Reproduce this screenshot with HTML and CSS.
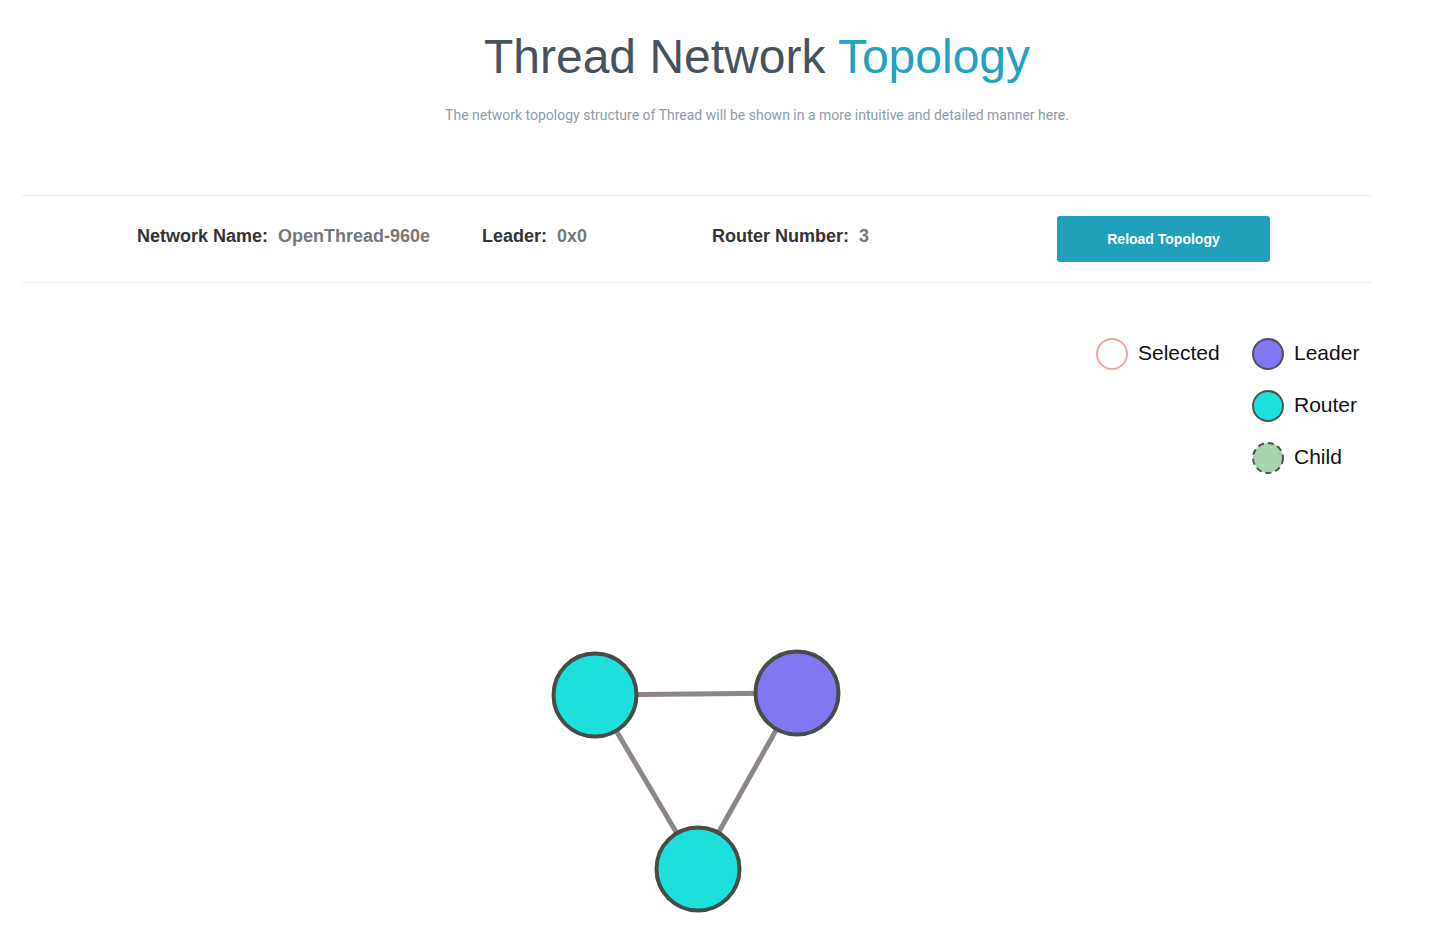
FILE: index.html
```html
<!DOCTYPE html>
<html lang="en">
<head>
<meta charset="utf-8">
<title>Thread Network Topology</title>
<link rel="stylesheet" href="styles.css">
</head>
<body>
<header class="page-header">
  <h1 class="title">Thread Network <span class="accent">Topology</span></h1>
  <p class="subtitle">The network topology structure of Thread will be shown in a more intuitive and detailed manner here.</p>
</header>

<section class="info-bar">
  <div class="info-item"><span class="info-label">Network Name:</span><span class="info-value">OpenThread-960e</span></div>
  <div class="info-item"><span class="info-label">Leader:</span><span class="info-value">0x0</span></div>
  <div class="info-item"><span class="info-label">Router Number:</span><span class="info-value">3</span></div>
  <div class="info-action"><button class="reload-btn" type="button">Reload Topology</button></div>
</section>

<section class="graph-area">
  <svg class="graph" width="1436" height="648" viewBox="0 0 1436 648">
    <g class="edges">
      <line x1="595" y1="412" x2="797" y2="410"/>
      <line x1="595" y1="412" x2="698" y2="586"/>
      <line x1="797" y1="410" x2="698" y2="586"/>
    </g>
    <g class="nodes">
      <circle class="node router" cx="595" cy="412" r="41.5"/>
      <circle class="node leader" cx="797" cy="410" r="41.5"/>
      <circle class="node router" cx="698" cy="586" r="41.5"/>
    </g>
  </svg>

  <div class="legend">
    <div class="legend-item legend-selected">
      <svg class="legend-dot" width="34" height="34" viewBox="0 0 34 34"><circle cx="17" cy="17" r="15" class="dot-selected"/></svg>
      <span class="legend-text">Selected</span>
    </div>
    <div class="legend-item">
      <svg class="legend-dot" width="34" height="34" viewBox="0 0 34 34"><circle cx="17" cy="17" r="15" class="dot-leader"/></svg>
      <span class="legend-text">Leader</span>
    </div>
    <div class="legend-item legend-col2">
      <svg class="legend-dot" width="34" height="34" viewBox="0 0 34 34"><circle cx="17" cy="17" r="15" class="dot-router"/></svg>
      <span class="legend-text">Router</span>
    </div>
    <div class="legend-item legend-col2">
      <svg class="legend-dot" width="34" height="34" viewBox="0 0 34 34"><circle cx="17" cy="17" r="15" class="dot-child"/></svg>
      <span class="legend-text">Child</span>
    </div>
  </div>
</section>
</body>
</html>
```

FILE: styles.css
```css
* { box-sizing: border-box; }

html, body {
  margin: 0;
  padding: 0;
  background: #ffffff;
}

body {
  font-family: "Liberation Sans", Arial, sans-serif;
  color: #333333;
  width: 1436px;
  min-height: 931px;
  overflow: hidden;
}

.page-header {
  padding-left: 78px;
  text-align: center;
  height: 195px;
  padding-top: 27px;
}

.title {
  margin: 0;
  font-family: "Liberation Sans", Arial, sans-serif;
  font-weight: 400;
  font-size: 48px;
  line-height: 60px;
  color: #47525e;
}

.title .accent {
  color: #22a1c1;
}

.subtitle {
  margin: 18px 0 0;
  font-family: Roboto, "Liberation Sans", sans-serif;
  font-weight: 400;
  font-size: 14px;
  line-height: 20px;
  color: #8e9aa8;
}

.info-bar {
  margin: 0 64px 0 22px;
  height: 88px;
  border-top: 1px solid #eeeeee;
  border-bottom: 1px solid #eeeeee;
  display: grid;
  grid-template-columns: 345px 230px 345px 213px;
  align-items: center;
  padding-left: 115px;
}

.info-item {
  font-family: "Liberation Sans", Arial, sans-serif;
  font-weight: 700;
  font-size: 18px;
  margin-top: -6px;
  white-space: nowrap;
}

.info-label {
  color: #333333;
  margin-right: 10px;
}

.info-value {
  color: #777777;
}

.info-action {
  display: flex;
}

.reload-btn {
  width: 213px;
  height: 46px;
  border: none;
  border-radius: 3px;
  background: #21a0bc;
  color: #ffffff;
  font-family: "Liberation Sans", Arial, sans-serif;
  font-weight: 700;
  font-size: 14px;
  cursor: pointer;
  margin-top: 0;
}

.graph-area {
  position: relative;
  height: 648px;
}

.graph {
  display: block;
}

.edges line {
  stroke: #8e8686;
  stroke-width: 5;
}

.node {
  stroke: #474c46;
  stroke-width: 4;
}

.node.router { fill: #1de0dc; }
.node.leader { fill: #8376f3; }

.legend {
  position: absolute;
  top: 54px;
  left: 1095px;
  display: grid;
  grid-template-columns: 156px auto;
  row-gap: 18px;
}

.legend-item {
  display: flex;
  align-items: center;
  gap: 9px;
  height: 34px;
}

.legend-col2 {
  grid-column: 2;
}

.legend-dot {
  display: block;
  flex: none;
}

.legend-text {
  font-family: "Liberation Sans", Arial, sans-serif;
  font-size: 21px;
  color: #111111;
  margin-top: -3px;
}

.dot-selected {
  fill: #ffffff;
  stroke: #f4a3a3;
  stroke-width: 2;
}

.dot-leader {
  fill: #8376f3;
  stroke: #4f524e;
  stroke-width: 2;
}

.dot-router {
  fill: #1de0dc;
  stroke: #4f524e;
  stroke-width: 2;
}

.dot-child {
  fill: #a6d4b0;
  stroke: #4f524e;
  stroke-width: 2;
  stroke-dasharray: 6 4;
}
```
